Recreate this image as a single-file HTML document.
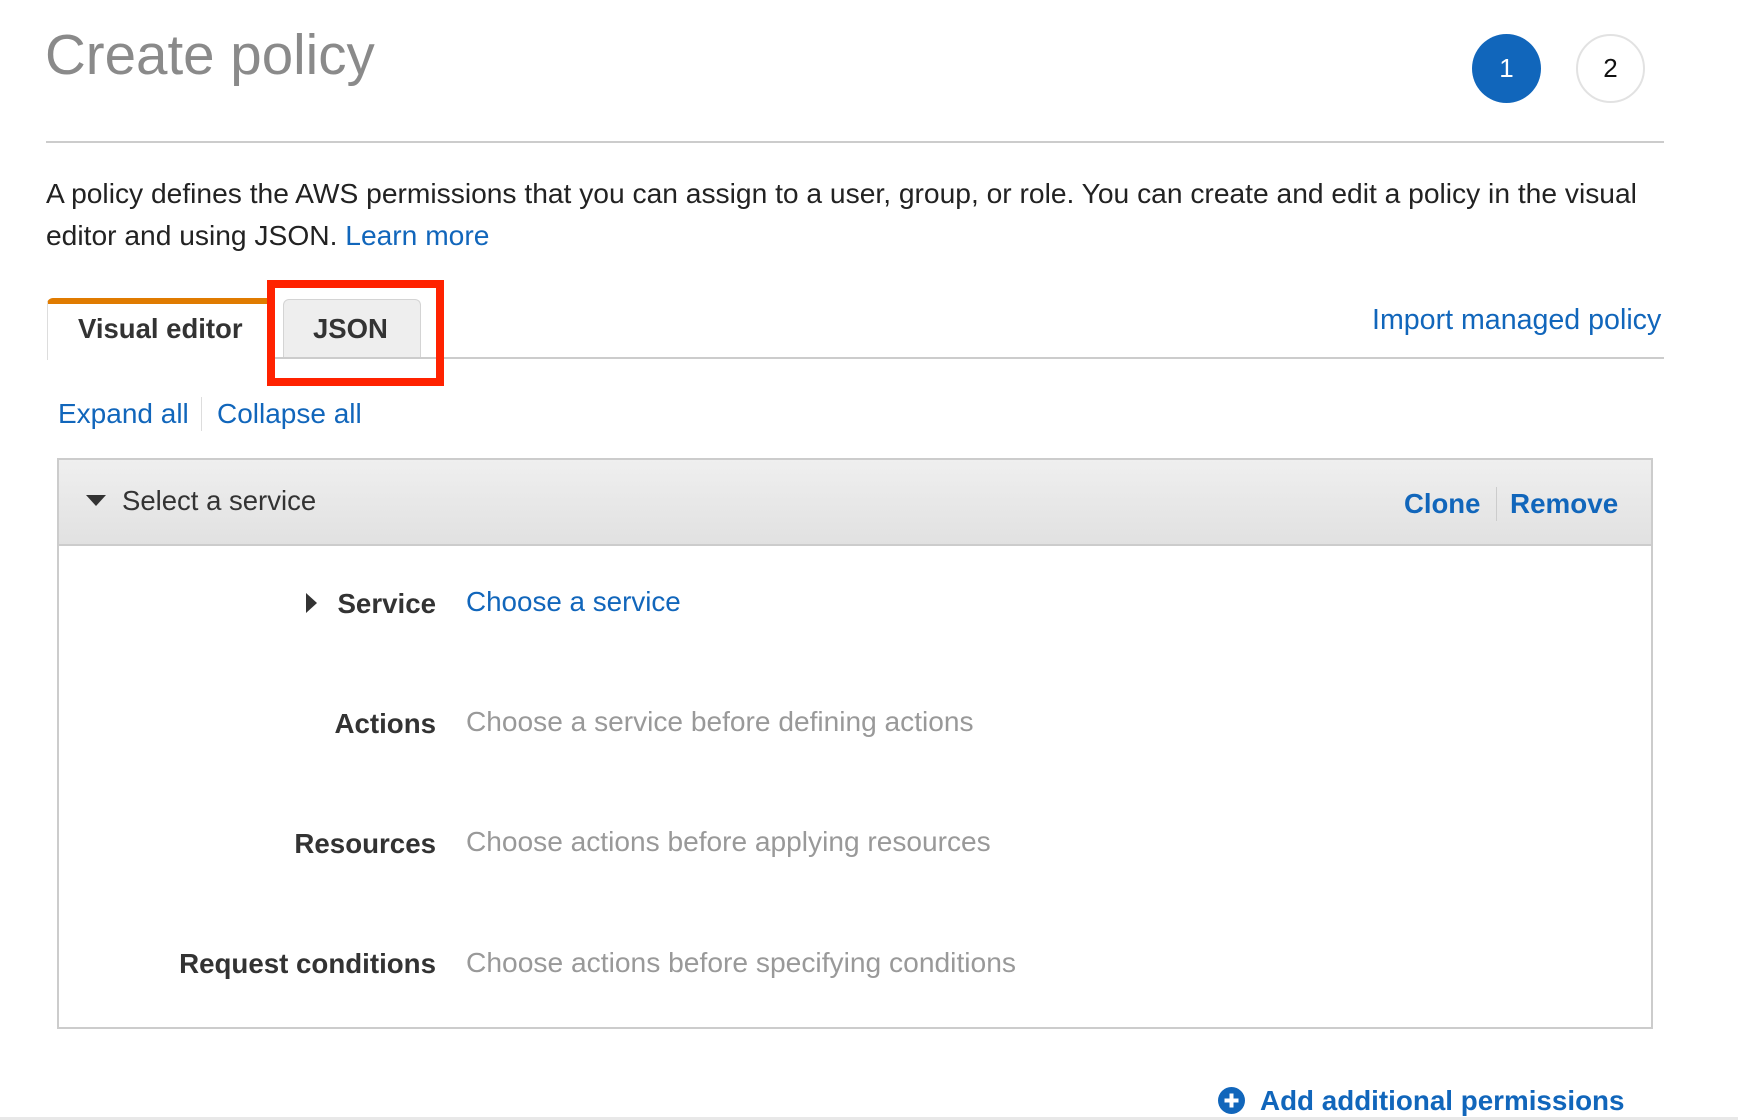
<!DOCTYPE html>
<html><head><meta charset="utf-8"><style>
*{margin:0;padding:0;box-sizing:border-box}
body{width:1738px;height:1120px;background:#fff;font-family:"Liberation Sans",Arial,sans-serif;position:relative;overflow:hidden;color:#222}
.a{position:absolute;white-space:nowrap}
.blue{color:#1166bb}
</style></head><body>
<div class="a" style="left:45px;top:22px;font-size:56.5px;color:#8a8a8a;line-height:66px">Create policy</div>
<div class="a" style="left:1472px;top:34px;width:69px;height:69px;border-radius:50%;background:#1166bb;color:#fff;font-size:26px;line-height:69px;text-align:center">1</div>
<div class="a" style="left:1576px;top:34px;width:69px;height:69px;border-radius:50%;border:2px solid #e2e2e2;color:#111;font-size:26px;line-height:65px;text-align:center">2</div>
<div class="a" style="left:46px;top:141px;width:1618px;height:2px;background:#ccc"></div>
<div class="a" style="left:46px;top:172px;font-size:28.2px;line-height:42px;color:#222">A policy defines the AWS permissions that you can assign to a user, group, or role. You can create and edit a policy in the visual<br>editor and using JSON. <span class="blue">Learn more</span></div>

<div class="a" style="left:47px;top:298px;width:220px;height:62px;border-top:6px solid #e07b00;border-left:1px solid #ddd;border-radius:6px 0 0 0;background:#fff;z-index:2"></div>
<div class="a" style="left:78px;top:313px;font-size:27.5px;font-weight:bold;color:#333;z-index:3">Visual editor</div>
<div class="a" style="left:283px;top:299px;width:138px;height:59px;background:#eee;border:1px solid #d4d4d4;border-bottom:none;border-radius:6px 6px 0 0"></div>
<div class="a" style="left:313px;top:313px;font-size:27.5px;font-weight:bold;color:#333">JSON</div>
<div class="a" style="left:267px;top:357px;width:1397px;height:2px;background:#ccc"></div>
<div class="a" style="left:267px;top:280px;width:177px;height:106px;border:8px solid #ff2200"></div>
<div class="a blue" style="left:1372px;top:304px;font-size:28.6px">Import managed policy</div>

<div class="a blue" style="left:58px;top:398px;font-size:28px">Expand all</div>
<div class="a" style="left:201px;top:397px;width:1px;height:34px;background:#ddd"></div>
<div class="a blue" style="left:217px;top:398px;font-size:28px">Collapse all</div>

<div class="a" style="left:57px;top:458px;width:1596px;height:571px;border:2px solid #ccc"></div>
<div class="a" style="left:59px;top:460px;width:1592px;height:86px;background:linear-gradient(#efefef,#e1e1e1);border-bottom:2px solid #ccc"></div>
<svg class="a" style="left:86px;top:495px" width="20" height="12"><path d="M0 0H20L10 11Z" fill="#333"/></svg>
<div class="a" style="left:122px;top:485px;font-size:27.5px;color:#333">Select a service</div>
<div class="a blue" style="left:1404px;top:488px;font-size:27.5px;font-weight:bold">Clone</div>
<div class="a" style="left:1496px;top:487px;width:1px;height:34px;background:#ccc"></div>
<div class="a blue" style="left:1510px;top:488px;font-size:27.8px;font-weight:bold">Remove</div>

<svg class="a" style="left:306px;top:593px" width="12" height="20"><path d="M0 0V20L11 10Z" fill="#333"/></svg>
<div class="a" style="left:0;width:436px;text-align:right;top:588px;font-size:27.7px;font-weight:bold;color:#333">Service</div>
<div class="a blue" style="left:466px;top:586px;font-size:27.8px">Choose a service</div>
<div class="a" style="left:0;width:436px;text-align:right;top:708px;font-size:27.7px;font-weight:bold;color:#333">Actions</div>
<div class="a" style="left:466px;top:706px;font-size:28.1px;color:#999">Choose a service before defining actions</div>
<div class="a" style="left:0;width:436px;text-align:right;top:828px;font-size:27.7px;font-weight:bold;color:#333">Resources</div>
<div class="a" style="left:466px;top:826px;font-size:28.1px;color:#999">Choose actions before applying resources</div>
<div class="a" style="left:0;width:436px;text-align:right;top:948px;font-size:27.7px;font-weight:bold;color:#333">Request conditions</div>
<div class="a" style="left:466px;top:946px;font-size:28.2px;color:#999">Choose actions before specifying conditions</div>

<svg class="a" style="left:1218px;top:1087px" width="27" height="27"><circle cx="13.5" cy="13.5" r="13.5" fill="#1166bb"/><path d="M13.5 6.5V20.5M6.5 13.5H20.5" stroke="#fff" stroke-width="4"/></svg>
<div class="a blue" style="left:1260px;top:1085px;font-size:27.8px;font-weight:bold">Add additional permissions</div>
<div class="a" style="left:0;top:1117px;width:1738px;height:3px;background:#e8e8e8"></div>
</body></html>
